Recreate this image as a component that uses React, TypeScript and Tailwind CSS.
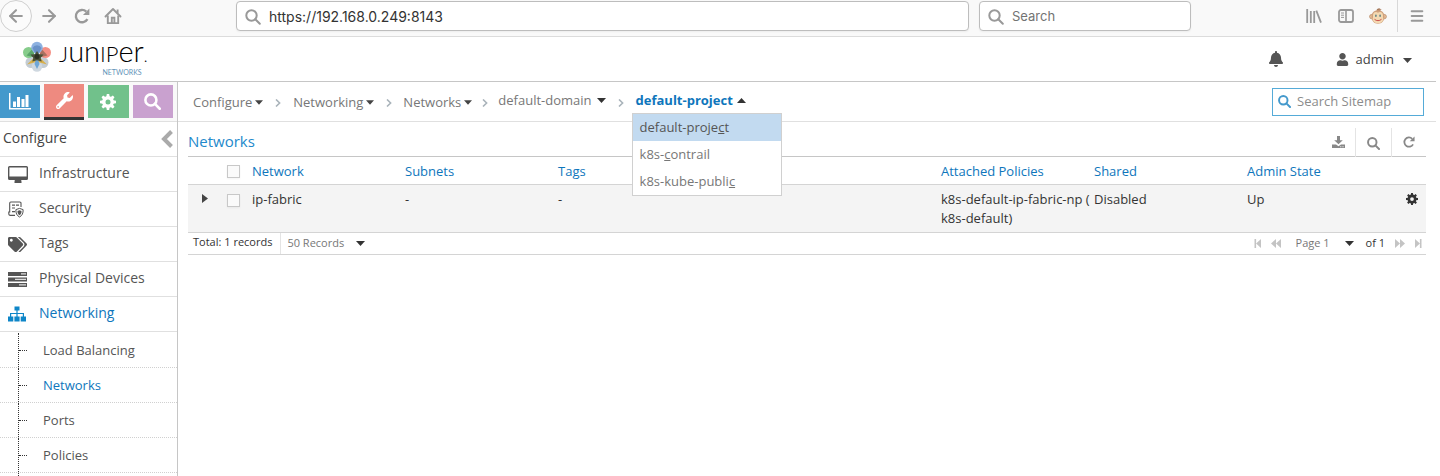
import React from 'react';
import { FaWrench, FaBell, FaUser, FaTags } from 'react-icons/fa';
import { ArrowLeft, ArrowRight, Menu } from 'lucide-react';

function Caret({ up = false, className = 'w-[9px] text-[#333]' }: { up?: boolean; className?: string }) {
  return (
    <svg viewBox="0 0 9 5" className={`h-[5px] shrink-0 ${className}`} fill="currentColor" aria-hidden="true">
      <path d={up ? 'M0 5h9L4.5 0z' : 'M0 0h9L4.5 5z'} />
    </svg>
  );
}

function Chevron() {
  return (
    <svg viewBox="0 0 6 8" className="h-2 w-1.5 shrink-0" fill="none" stroke="#a9b3ba" strokeWidth="1.6" aria-hidden="true">
      <path d="M1 .5 4.6 4 1 7.5" />
    </svg>
  );
}

function Magnifier({ className, weight = 2.4 }: { className: string; weight?: number }) {
  return (
    <svg viewBox="0 0 16 16" className={`shrink-0 ${className}`} fill="none" stroke="currentColor" strokeWidth={weight} aria-hidden="true">
      <circle cx="6.500" cy="6.500" r="5.200" />
      <path d="M10.300 10.300 14.800 14.800" strokeLinecap="round" />
    </svg>
  );
}

const teeth = [0, 45, 90, 135];

function Gear({ className }: { className: string }) {
  return (
    <svg viewBox="0 0 16 16" className={className} aria-hidden="true">
      <circle cx="8" cy="8" r="4.200" fill="none" stroke="currentColor" strokeWidth="3.400" />
      {teeth.map((angle) => (
        <g key={angle} transform={`rotate(${angle} 8 8)`} fill="currentColor">
          <path d="M6.300 3 6.800 0h2.400l.5 3zM6.300 13l.5 3h2.400l.5-3z" />
        </g>
      ))}
    </svg>
  );
}

function HomeIcon() {
  return (
    <svg viewBox="0 0 18 18" className="size-[18px]" fill="none" stroke="currentColor" strokeWidth="1.9" aria-hidden="true">
      <path d="M1.500 9.500 9 2l7.500 7.500" strokeLinejoin="round" strokeLinecap="round" />
      <path d="M3.8 8.5v7.6h10.4V8.5M13.600 6V2.500" />
      <path d="M7.8 16v-5.2h2.6V16" />
    </svg>
  );
}

function LibraryIcon() {
  return (
    <svg viewBox="0 0 16 16" className="size-4" stroke="currentColor" strokeWidth="1.8" fill="none" aria-hidden="true">
      <path d="M1.2 1v14M4.8 3v12M8.2 3v12M10.3 2.6 15 14.6" />
    </svg>
  );
}

function SidebarIcon() {
  return (
    <svg viewBox="0 0 16 14" className="h-3.5 w-4" stroke="currentColor" fill="none" aria-hidden="true">
      <rect x="1" y="1" width="14" height="12" rx="2" strokeWidth="1.8" />
      <path d="M8 1v12" strokeWidth="1.6" />
      <path d="M3 4h3M3 6.2h3M3 8.4h3" strokeWidth="1" />
    </svg>
  );
}

function MonkeyIcon() {
  return (
    <svg viewBox="0 0 18 18" className="size-[18px]" aria-hidden="true">
      <circle cx="2.8" cy="9.6" r="2.2" fill="#e9c19c" stroke="#b98d6b" strokeWidth=".8" />
      <circle cx="15.2" cy="9.6" r="2.2" fill="#e9c19c" stroke="#b98d6b" strokeWidth=".8" />
      <path d="M8 4C7 2.500 8 1 11.500 1.200 9.800 2 10.500 2.500 12.500 2.200 12 3.300 11 4 10 4z" fill="#a87b5c" />
      <path d="M9 3.300c4 0 6.500 2.600 6.500 6.500 0 4.200-2.800 7-6.500 7s-6.500-2.800-6.500-7c0-3.900 2.500-6.500 6.500-6.500z" fill="#cfa07c" />
      <path d="M9 5.800c1.500-1.600 5-1 5 2.600 0 1.300-.2 1.700.3 3 0 2.900-2.300 4.800-5.300 4.800s-5.300-1.900-5.300-4.800c.5-1.300.3-1.700.3-3 0-3.600 3.500-4.200 5-2.600z" fill="#f4d9b2" />
      <ellipse cx="6.900" cy="8.700" rx=".8" ry="1.200" fill="#5a7f82" />
      <ellipse cx="11.100" cy="8.700" rx=".8" ry="1.200" fill="#5a7f82" />
      <path d="M5.500 12.300c2 1.800 5 1.800 7 0" stroke="#c9504a" fill="none" strokeWidth="1" />
    </svg>
  );
}

function Flower() {
  return (
    <svg viewBox="0 0 30 32" className="h-8 w-[30px]" aria-hidden="true">
      <circle cx="9" cy="21.500" r="5.500" fill="#c3ccd3" />
      <circle cx="21" cy="21.500" r="5.500" fill="#c3ccd3" />
      <circle cx="15" cy="25.500" r="5.200" fill="#cfd8e0" />
      <circle cx="6.600" cy="11.500" r="5.600" fill="#86cc8b" />
      <circle cx="23.400" cy="11.500" r="5.600" fill="#f48f84" />
      <circle cx="15" cy="6.600" r="5.800" fill="#8db1e0" />
      <path d="M15 16 10.500 7a5 5 0 0 1 9 0z" fill="#6a92c8" />
      <path d="M15 17 4.500 14.500l5.200-5.800z" fill="#5aa56b" />
      <path d="M15 17l10.500-2.500-5.200-5.800z" fill="#a8705f" />
      <path d="M15 14 5 23.500l9-2.500zM15 14l10 9.500-9-2.500z" fill="#d9b04a" />
      <path d="M15 15l-2.500 8 2.500 5 2.500-5z" fill="#6fa6d6" />
      <path d="M15 10l2 3.200 4.500.3-2.800 3.500 1 3.500-4.700-1.300-4.700 1.300 1-3.500-2.800-3.500 4.500-.3z" fill="#4a5238" />
      <circle cx="15" cy="15.500" r="2.500" fill="#2a3022" />
    </svg>
  );
}

function BarChartIcon() {
  return (
    <svg viewBox="0 0 22 17" className="h-[17px] w-[22px]" fill="currentColor" aria-hidden="true">
      <path d="M0 0h1.500v15H22v1.500H0zM4 8.500h3V14H4zM8 4h3v10H8zM12.500 6h3v8h-3zM16.500 2h3v12h-3z" />
    </svg>
  );
}

function DesktopIcon() {
  return (
    <svg viewBox="0 0 20 17" className="h-[17px] w-5" aria-hidden="true">
      <path fillRule="evenodd" fill="currentColor" d="M1.500 0h17A1.500 1.500 0 0 1 20 1.500v11a1.500 1.500 0 0 1-1.500 1.500h-5.300l.3 1.800v1.200h-7v-1.200l.3-1.800H1.500A1.500 1.500 0 0 1 0 12.500v-11A1.500 1.500 0 0 1 1.500 0zM1.400 1.400v9h17.200v-9z" />
    </svg>
  );
}

function SitemapIcon() {
  return (
    <svg viewBox="0 0 18 16" className="h-4 w-[18px] text-[#0e86c8]" fill="currentColor" aria-hidden="true">
      <path d="M6.500.5h5v4h-5zM0 10.500h5.300v5H0zM6.400 10.500h5.200v5H6.400zM12.700 10.500H18v5h-5.300z" />
      <path d="M9 4v7M2.600 11V7.500h12.800V11" fill="none" stroke="currentColor" strokeWidth="1.200" />
    </svg>
  );
}

function SecurityIcon() {
  return (
    <svg viewBox="0 0 16 17" className="h-[17px] w-4" fill="none" stroke="currentColor" aria-hidden="true">
      <path d="M13 6V2.200Q13 1 11.800 1H2.800Q1.700 1 1.700 2.200v8.800H.8v2.200Q1 14.400 2.200 14.400H7" strokeWidth="1.100" />
      <path d="M4 4.200h3M8 4.200h3M4 7h3M4 10.600h3" strokeWidth="1.200" />
      <path d="M11.500 7.400l3.600 1.200c.2 3.600-.9 6-3.600 7.400-2.700-1.400-3.800-3.800-3.600-7.400z" fill="#fff" strokeWidth="1" />
      <path d="M11.500 9.300l2 .7c.1 2-.6 3.400-2 4.300-1.400-.9-2.100-2.300-2-4.300z" fill="currentColor" stroke="none" />
    </svg>
  );
}

function ServersIcon() {
  return (
    <svg viewBox="0 0 19 15" className="h-[15px] w-[19px]" aria-hidden="true">
      <path d="M0 0h19v4H0zM0 5.500h19v4H0zM0 11h19v4H0z" fill="currentColor" />
      <path d="M13 1.300h5v1.200h-5zM7 6.800h11V8H7zM11 12.300h7v1.200h-7z" fill="#ddd" />
    </svg>
  );
}

function DownloadIcon() {
  return (
    <svg viewBox="0 0 13 13" className="size-[13px]" fill="currentColor" aria-hidden="true">
      <path d="M5 0h3v4.200h2.800L6.500 8.300 2.200 4.200H5z" />
      <path d="M0 8.500h4l2.500 1.800L9 8.500h4V12H0z" />
      <path d="M8.300 10.200h1v1h-1zM10.500 10.200h1v1h-1z" fill="#fff" />
    </svg>
  );
}

function RefreshIcon({ className }: { className: string }) {
  return (
    <svg viewBox="0 0 13 13" className={className} aria-hidden="true">
      <path d="M10.900 9A5 5 0 1 1 10 3" fill="none" stroke="currentColor" strokeWidth="1.900" />
      <path d="M12.500.5v5.200H7.300z" fill="currentColor" />
    </svg>
  );
}

function PageArrow({ kind, flip = false }: { kind: 'end' | 'step'; flip?: boolean }) {
  return (
    <svg viewBox="0 0 10 9" className={`h-[9px] w-2.5 ${flip ? '-scale-x-100' : ''}`} fill="currentColor" aria-hidden="true">
      <path d={kind === 'end' ? 'M1.500 0h1.600v9H1.500zM8 0v9L3.100 4.500z' : 'M5 0v9L0 4.500zM10 0v9L5 4.500z'} />
    </svg>
  );
}

function BrowserBar() {
  return (
    <div className="flex h-[37px] items-center border-b border-[#dcdcdc] bg-[#f9f9f9] pb-1 font-[Inter,sans-serif] text-[#999]">
      <button aria-label="Back" className="flex size-8 items-center justify-center rounded-full border border-[#cfcfcf] bg-[#fbfbfb]">
        <ArrowLeft className="size-5" strokeWidth={2.500} />
      </button>
      <button aria-label="Forward" className="ml-[7px]"><ArrowRight className="size-5" strokeWidth={2.500} /></button>
      <button aria-label="Reload" className="ml-[15px]"><RefreshIcon className="size-4" /></button>
      <button aria-label="Home" className="ml-[14px]"><HomeIcon /></button>
      <label className="ml-[114px] flex h-[30px] flex-1 items-center gap-2 rounded-sm border border-[#bdbdbd] bg-white px-2 pt-px shadow-xs">
        <Magnifier className="size-4" weight={2} />
        <input aria-label="Address" defaultValue="https://192.168.0.249:8143" className="min-w-0 flex-1 text-sm text-[#333] outline-none" />
      </label>
      <label className="ml-2.5 flex h-[30px] w-[212px] items-center gap-2 rounded-sm border border-[#bdbdbd] bg-white px-2 pt-px shadow-xs">
        <Magnifier className="size-4" weight={2} />
        <input aria-label="Search the web" placeholder="Search" className="min-w-0 flex-1 text-[13px] outline-none placeholder:text-[#737373]" />
      </label>
      <button aria-label="Library" className="ml-[115px]"><LibraryIcon /></button>
      <button aria-label="Sidebars" className="ml-4"><SidebarIcon /></button>
      <button aria-label="Account" className="ml-[15px]"><MonkeyIcon /></button>
      <div className="ml-2.5 h-8 border-l border-[#d8d8d8]" />
      <button aria-label="Open menu" className="mr-[15px] ml-[11px]"><Menu className="size-4" strokeWidth={3} /></button>
    </div>
  );
}

function Header() {
  return (
    <header className="flex h-[45px] items-center border-b border-[#c6c6c6] pr-6 pl-[22px]">
      <a href="#home" aria-label="Juniper Networks" className="flex items-center gap-[7px] pb-1">
        <Flower />
        <span className="flex flex-col items-end pt-0.5 font-[Lato,sans-serif]">
          <span className="text-[22px] leading-5 text-black">
            <span className="font-light">J<span className="text-[29px]">un</span>IP<span className="text-[29px]">er</span><span className="text-base">.</span></span>
          </span>
          <span className="pr-1.5 text-[7px] leading-2 text-[#5f93b8]">NETWORKS</span>
        </span>
      </a>
      <button aria-label="Alerts" className="mr-[52px] ml-auto text-[#555]"><FaBell className="size-4" /></button>
      <button className="flex items-center pt-0.5 text-[13px] text-[#444]">
        <FaUser className="mr-[7px] mb-0.5 size-[13px] text-[#555]" />
        admin
        <Caret className="ml-[9px] w-[9px] text-[#444]" />
      </button>
    </header>
  );
}

const navItems = [
  { label: 'Infrastructure', icon: <DesktopIcon /> },
  { label: 'Security', icon: <SecurityIcon /> },
  { label: 'Tags', icon: <FaTags className="size-[19px]" /> },
  { label: 'Physical Devices', icon: <ServersIcon /> },
  { label: 'Networking', icon: <SitemapIcon />, active: true },
];

const subItems = ['Load Balancing', 'Networks', 'Ports', 'Policies'];

function Sidebar() {
  return (
    <nav className="flex w-[178px] shrink-0 flex-col border-r border-[#c6c6c6] text-[#555]">
      <div className="flex h-10 items-center gap-1 border-b border-[#e0e0e0] bg-[#f9f9f9] pr-1 text-white">
        <button aria-label="Monitor" className="flex h-[33px] w-10 items-center justify-center bg-[#4499cc]"><BarChartIcon /></button>
        <button aria-label="Configure" className="flex h-9 flex-1 items-center justify-center border-b-3 border-[#333] bg-[#ee8a80]"><FaWrench className="size-[17px]" /></button>
        <button aria-label="Settings" className="flex h-[33px] flex-1 items-center justify-center bg-[#71c18b]"><Gear className="size-4" /></button>
        <button aria-label="Query" className="flex h-[33px] flex-1 items-center justify-center bg-[#c9a1cf]"><Magnifier className="size-[17px]" /></button>
      </div>
      <div className="flex h-[35px] items-center justify-between border-b border-[#e0e0e0] pr-1 pb-0.5 pl-[3px] text-sm text-[#444]">
        Configure
        <button aria-label="Collapse menu" className="pt-0.5 text-[#aaa]">
          <svg viewBox="0 0 12 18" className="h-[18px] w-3" fill="none" stroke="currentColor" strokeWidth="4"><path d="M10.500 1.500 3 9l7.500 7.500" /></svg>
        </button>
      </div>
      {navItems.map((item) => (
        <a key={item.label} href="#nav" className={`flex h-[35px] items-center border-b border-[#e0e0e0] pb-0.5 pl-2 text-sm ${item.active ? 'text-[#0e76bc]' : ''}`}>
          <span className="flex w-[31px] items-center pt-0.5">{item.icon}</span>
          {item.label}
        </a>
      ))}
      <div className="flex flex-1 flex-col pt-px">
        {subItems.map((label) => (
          <a key={label} href="#sub" className={`flex h-[35px] items-center border-b border-dotted border-[#d0d0d0] pl-[18px] text-[13px] ${label === 'Networks' ? 'text-[#0e76bc]' : ''}`}>
            <span className="h-full border-l border-dotted border-[#333]" />
            <span className="mr-4 w-2 border-t border-dotted border-[#333]" />
            <span className="pt-0.5">{label}</span>
          </a>
        ))}
        <div className="ml-[18px] flex-1 border-l border-dotted border-[#333]" />
      </div>
    </nav>
  );
}

function Breadcrumbs() {
  return (
    <div className="flex h-10 items-center border-b border-[#e0e0e0] pr-3 pl-[15px] text-[13px] text-[#777]">
      <div className="flex items-center pt-0.5">
        <button className="flex items-center gap-[3px]">Configure<Caret className="w-2 text-[#444]" /></button>
        <span className="mx-3"><Chevron /></span>
        <button className="flex items-center gap-[3px]">Networking<Caret className="w-2 text-[#444]" /></button>
        <span className="mr-[11px] ml-3"><Chevron /></span>
        <button className="flex items-center gap-[3px]">Networks<Caret className="w-2 text-[#444]" /></button>
        <span className="mx-2.5"><Chevron /></span>
        <button className="flex items-center gap-[5px] pb-1">default-domain<Caret /></button>
        <span className="mx-3"><Chevron /></span>
        <div className="relative pb-1">
          <button aria-expanded="true" className="flex items-center gap-1 font-bold text-[#0e76bc]">default-project<Caret up /></button>
          <ul role="listbox" aria-label="Projects" className="absolute top-full -left-1 z-10 -mt-px w-[150px] border border-[#d0d0d0] bg-white font-normal">
            <li role="option" aria-selected="true" className="bg-[#c2daf0] px-[7px] leading-[27px] text-[#555]">default-proje<u>c</u>t</li>
            <li role="option" aria-selected="false" className="px-[7px] leading-[27px]">k8s-<u>c</u>ontrail</li>
            <li role="option" aria-selected="false" className="px-[7px] leading-[27px]">k8s-kube-publi<u>c</u></li>
          </ul>
        </div>
      </div>
      <label className="ml-auto flex h-7 w-[152px] items-center gap-1.5 border border-[#55abd8] px-[5px] text-[#4499cc]">
        <Magnifier className="size-[13px]" />
        <input aria-label="Search Sitemap" placeholder="Search Sitemap" className="min-w-0 flex-1 text-[13px] outline-none placeholder:text-[#8c8c8c]" />
      </label>
    </div>
  );
}

function NetworksGrid() {
  const box = 'block size-[13px] appearance-none border border-[#c8c8c8] bg-[#fafafa] shadow-xs';
  return (
    <section className="px-2.5">
      <div className="flex h-[35px] items-center border-b border-[#c6c6c6]">
        <h1 className="pt-1 text-[15px] text-[#2389cb]">Networks</h1>
        <div className="mt-1.5 ml-auto flex h-[29px] items-center text-[#888]">
          <button aria-label="Export" className="px-2.5"><DownloadIcon /></button>
          <button aria-label="Search networks" className="flex h-full items-center border-x border-[#e4e4e4] px-[11px] pt-0.5"><Magnifier className="size-[13px]" /></button>
          <button aria-label="Refresh" className="px-[11px]"><RefreshIcon className="size-3" /></button>
        </div>
      </div>
      <table className="w-full table-fixed text-left text-[13px] leading-[19px]">
        <colgroup>
          <col className="w-[35px]" />
          <col className="w-[26px]" />
          <col className="w-[153px]" />
          <col className="w-[153px]" />
          <col className="w-[153px]" />
          <col />
          <col className="w-[153px]" />
          <col className="w-[153px]" />
          <col className="w-[153px]" />
          <col className="w-[29px]" />
        </colgroup>
        <thead>
          <tr className="h-[27px] border-b border-[#d4d4d4] text-[#0e76bc] [&>th]:px-[3px] [&>th]:pt-0.5 [&>th]:font-normal">
            <td />
            <td className="px-1 pt-0.5"><input type="checkbox" aria-label="Select all" className={box} /></td>
            <th>Network</th>
            <th>Subnets</th>
            <th>Tags</th>
            <td />
            <th>Attached Policies</th>
            <th>Shared</th>
            <th>Admin State</th>
            <td />
          </tr>
        </thead>
        <tbody>
          <tr className="h-12 border-b border-[#d4d4d4] bg-[#f4f4f4] align-top text-[#333] [&>td]:pt-[5px]">
            <td className="pl-3.5">
              <button aria-label="Expand row" className="block pt-1 text-[#444]">
                <svg viewBox="0 0 6 9" className="h-[9px] w-1.5" fill="currentColor"><path d="M0 0v9l6-4.500z" /></svg>
              </button>
            </td>
            <td className="px-1"><input type="checkbox" aria-label="Select ip-fabric" className={`${box} mt-1`} /></td>
            <td className="px-[3px]">ip-fabric</td>
            <td className="px-[3px]">-</td>
            <td className="px-[3px]">-</td>
            <td />
            <td className="pl-[3px] whitespace-nowrap">k8s-default-ip-fabric-np (<br />k8s-default)</td>
            <td className="px-[3px]">Disabled</td>
            <td className="px-[3px]">Up</td>
            <td className="pl-[9px]"><button aria-label="Row actions" className="block pt-[3px]"><Gear className="size-3" /></button></td>
          </tr>
        </tbody>
      </table>
      <div className="flex h-[22px] items-center border-b border-[#d4d4d4] pr-[3px] pl-[5px] text-[11px] text-[#333]">
        <span className="pb-0.5">Total: 1 records</span>
        <label className="ml-2 flex h-full items-center border-l border-[#e4e4e4] pl-1.5 text-[#777]">
          <select aria-label="Records per page" className="w-[69px] appearance-none outline-none"><option>50 Records</option></select>
          <Caret />
        </label>
        <div className="ml-auto flex items-center text-[#c4c4c4]">
          <button aria-label="First page"><PageArrow kind="end" /></button>
          <button aria-label="Previous page" className="ml-2"><PageArrow kind="step" /></button>
          <label className="ml-[15px] flex items-center text-[#777]">
            <select aria-label="Page" className="w-[49px] appearance-none outline-none"><option>Page 1</option></select>
            <Caret />
          </label>
          <span className="mr-2.5 ml-3 text-[#333]">of 1</span>
          <button aria-label="Next page"><PageArrow kind="step" flip /></button>
          <button aria-label="Last page" className="ml-2"><PageArrow kind="end" flip /></button>
        </div>
      </div>
    </section>
  );
}

export default function App() {
  return (
    <div className="flex min-h-screen flex-col bg-white font-['Open_Sans',sans-serif]">
      <BrowserBar />
      <div className="flex flex-1 flex-col pr-1">
        <Header />
        <div className="flex flex-1">
          <Sidebar />
          <main className="min-w-0 flex-1">
            <Breadcrumbs />
            <NetworksGrid />
          </main>
        </div>
      </div>
    </div>
  );
}
